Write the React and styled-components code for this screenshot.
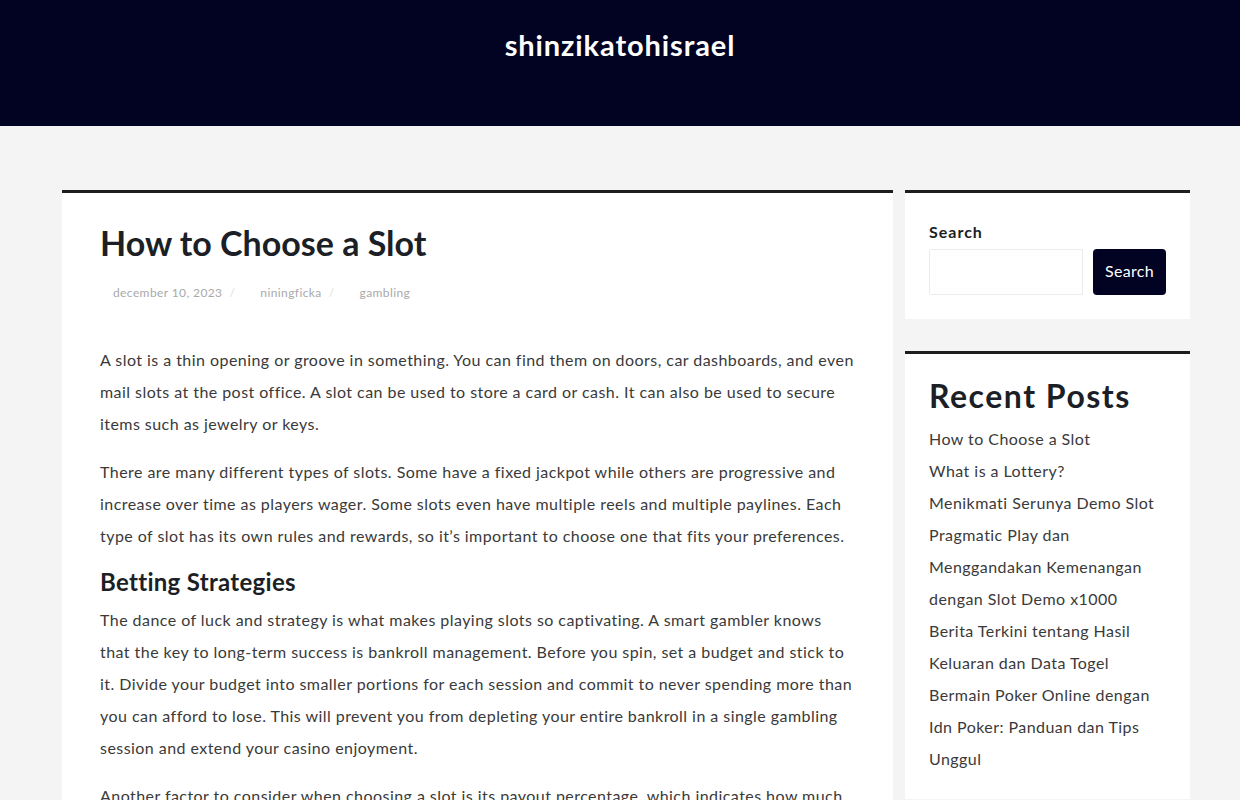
import React from "react";
import styled, { createGlobalStyle } from "styled-components";

const recentPosts = [
  "How to Choose a Slot",
  "What is a Lottery?",
  "Menikmati Serunya Demo Slot Pragmatic Play dan Menggandakan Kemenangan dengan Slot Demo x1000",
  "Berita Terkini tentang Hasil Keluaran dan Data Togel",
  "Bermain Poker Online dengan Idn Poker: Panduan dan Tips Unggul",
];

export default function App() {
  return (
    <>
      <GlobalStyle />
      <Header>
        <SiteTitle>shinzikatohisrael</SiteTitle>
      </Header>
      <Main>
        <Article>
          <Title>How to Choose a Slot</Title>
          <Meta>
            <MetaItem>december 10, 2023</MetaItem>
            <Sep>/</Sep>
            <MetaItem>niningficka</MetaItem>
            <Sep>/</Sep>
            <MetaItem>gambling</MetaItem>
          </Meta>
          <Body>
            <p>
              A slot is a thin opening or groove in something. You can find them on doors, car
              dashboards, and even mail slots at the post office. A slot can be used to store a card
              or cash. It can also be used to secure items such as jewelry or keys.
            </p>
            <p>
              There are many different types of slots. Some have a fixed jackpot while others are
              progressive and increase over time as players wager. Some slots even have multiple reels
              and multiple paylines. Each type of slot has its own rules and rewards, so it’s important
              to choose one that fits your preferences.
            </p>
            <SubHeading>Betting Strategies</SubHeading>
            <p>
              The dance of luck and strategy is what makes playing slots so captivating. A smart gambler
              knows that the key to long-term success is bankroll management. Before you spin, set a
              budget and stick to it. Divide your budget into smaller portions for each session and
              commit to never spending more than you can afford to lose. This will prevent you from
              depleting your entire bankroll in a single gambling session and extend your casino
              enjoyment.
            </p>
            <p>
              Another factor to consider when choosing a slot is its payout percentage, which indicates
              how much a machine pays back to players over time. A higher payout percentage means you
              have a better chance of winning.
            </p>
          </Body>
        </Article>
        <Sidebar>
          <Widget>
            <SearchLabel>Search</SearchLabel>
            <SearchRow>
              <SearchInput type="text" />
              <SearchButton>Search</SearchButton>
            </SearchRow>
          </Widget>
          <Widget $top={22}>
            <WidgetTitle>Recent Posts</WidgetTitle>
            <PostList>
              {recentPosts.map((p) => (
                <li key={p}>{p}</li>
              ))}
            </PostList>
          </Widget>
        </Sidebar>
      </Main>
    </>
  );
}

const GlobalStyle = createGlobalStyle`
  body {
    margin: 0;
    background: #f4f4f4;
    font-family: Lato, "Open Sans", sans-serif;
    color: #333;
  }
`;

const Header = styled.header`
  background: #020222;
  height: 126px;
  display: flex;
  justify-content: center;
`;

const SiteTitle = styled.h1`
  margin: 28px 0 0;
  color: #fff;
  font-size: 29px;
  font-weight: 700;
  letter-spacing: 0.9px;
  line-height: 34px;
  height: 34px;
`;

const Main = styled.div`
  display: grid;
  grid-template-columns: 831px 285px;
  gap: 12px;
  padding: 64px 50px 0 62px;
  align-items: start;
`;

const Article = styled.article`
  background: #fff;
  border-top: 3px solid #1e1e1e;
  padding: 30px 38px 40px;
`;

const Title = styled.h2`
  margin: 0;
  font-size: 34px;
  line-height: 40px;
  font-weight: 700;
  color: #1c1f26;
`;

const Meta = styled.div`
  display: flex;
  align-items: center;
  margin-top: 22px;
  font-size: 12px;
  letter-spacing: 0.4px;
  color: #a9a9a9;
`;

const MetaItem = styled.span`
  padding-left: 13px;
`;

const Sep = styled.span`
  color: #ddd;
  margin: 0 12px 0 7px;
`;

const Body = styled.div`
  margin-top: 44px;
  font-size: 16px;
  line-height: 32px;
  font-weight: 400;
  letter-spacing: 0.45px;
  color: #3a3a3a;

  p {
    margin: 0 0 16px;
  }
`;

const SubHeading = styled.h3`
  margin: 0 0 8px;
  font-size: 24px;
  line-height: 28px;
  font-weight: 700;
  letter-spacing: 0.3px;
  color: #1c1f26;
`;

const Sidebar = styled.aside`
  display: flex;
  flex-direction: column;
  gap: 32px;
`;

const Widget = styled.section`
  background: #fff;
  border-top: 3px solid #1e1e1e;
  padding: ${(p) => p.$top || 28}px 24px 24px;
`;

const SearchLabel = styled.label`
  display: block;
  font-size: 16px;
  font-weight: 700;
  letter-spacing: 1px;
  color: #1c1f26;
  line-height: 22px;
  margin-bottom: 6px;
`;

const SearchRow = styled.div`
  display: flex;
  gap: 10px;
`;

const SearchInput = styled.input`
  width: 154px;
  height: 46px;
  box-sizing: border-box;
  border: 1px solid #ececec;
  border-radius: 2px;
  background: #fff;
`;

const SearchButton = styled.button`
  height: 46px;
  width: 73px;
  padding: 0 0 3px;
  border: none;
  border-radius: 4px;
  background: #020222;
  color: #fff;
  font-family: inherit;
  font-size: 16px;
  font-weight: 400;
  letter-spacing: 0.3px;
`;

const WidgetTitle = styled.h2`
  margin: 0;
  font-size: 32px;
  line-height: 40px;
  font-weight: 700;
  letter-spacing: 1.5px;
  color: #1c1f26;
`;

const PostList = styled.ul`
  list-style: none;
  margin: 7px 0 0;
  padding: 0;
  font-size: 16px;
  line-height: 32px;
  font-weight: 400;
  letter-spacing: 0.45px;
  color: #3a3a3a;
`;
